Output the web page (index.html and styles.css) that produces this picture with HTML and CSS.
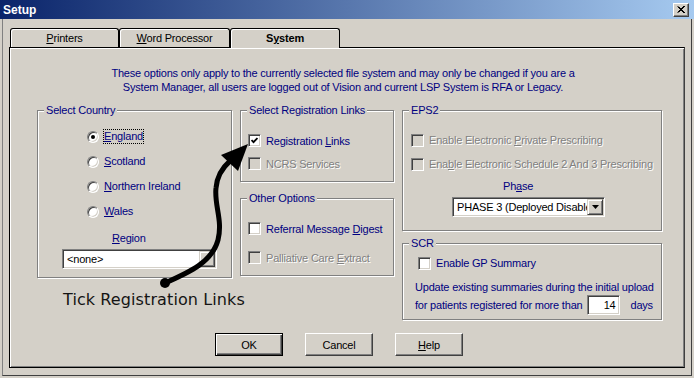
FILE: index.html
```html
<!DOCTYPE html>
<html lang="en">
  <head>
    <meta charset="UTF-8" />
    <meta name="viewport" content="width=device-width, initial-scale=1.0" />
    <title>Setup</title>
    <link rel="stylesheet" href="styles.css">
  </head>
  <body>
    <div class="window">
      <div class="titlebar">
        <span class="title">Setup</span>
        <span class="close">
          <svg width="8" height="7" viewBox="0 0 8 7"><path d="M0.5 0.5 L7 7 M1.5 0.5 L8 7 M7 0 L0.5 6.5 M8 0 L1.5 6.5" stroke="#000" stroke-width="1" fill="none"/></svg>
        </span>
      </div>

      <div class="client">
        <div class="tabs">
          <div class="tab tab-printers"><u>P</u>rinters</div>
          <div class="tab tab-word"><u>W</u>ord Processor</div>
          <div class="tab tab-system active">S<u>y</u>stem</div>
        </div>

        <div class="panel">
          <p class="notice">These options only apply to the currently selected file system and may only be changed if you are a<br>System Manager, all users are logged out of Vision and current LSP System is RFA or Legacy.</p>

          <div class="columns">
            <!-- left column -->
            <div class="col col-country">
              <fieldset class="group country">
                <legend>Select Country</legend>
                <div class="radios">
                  <div class="radio-row"><span class="radio checked"></span><span class="lbl focus"><u>E</u>ngland</span></div>
                  <div class="radio-row"><span class="radio"></span><span class="lbl"><u>S</u>cotland</span></div>
                  <div class="radio-row"><span class="radio"></span><span class="lbl"><u>N</u>orthern Ireland</span></div>
                  <div class="radio-row"><span class="radio"></span><span class="lbl"><u>W</u>ales</span></div>
                </div>
                <div class="region-label"><u>R</u>egion</div>
                <div class="combo region">
                  <span class="combo-text">&lt;none&gt;</span>
                  <span class="combo-btn"></span>
                </div>
              </fieldset>
              <div class="note">Tick Registration Links</div>
            </div>

            <!-- middle column -->
            <div class="col col-links">
              <fieldset class="group reg-links">
                <legend>Select Registration Links</legend>
                <div class="check-row first">
                  <span class="check">
                    <svg width="7" height="7" viewBox="0 0 7 7"><path d="M0.5 3 L2.5 5.2 L6.5 1" stroke="#000" stroke-width="1.8" fill="none"/></svg>
                  </span>
                  <span class="lbl">Registration <u>L</u>inks</span>
                </div>
                <div class="check-row">
                  <span class="check disabled"></span>
                  <span class="lbl disabled">NCRS Services</span>
                </div>
              </fieldset>

              <fieldset class="group other">
                <legend>Other Options</legend>
                <div class="check-row first">
                  <span class="check"></span>
                  <span class="lbl">Referral Message <u>D</u>igest</span>
                </div>
                <div class="check-row spaced">
                  <span class="check disabled"></span>
                  <span class="lbl disabled">Palliative Care <u>E</u>xtract</span>
                </div>
              </fieldset>
            </div>

            <!-- right column -->
            <div class="col col-eps">
              <fieldset class="group eps2">
                <legend>EPS2</legend>
                <div class="check-row first">
                  <span class="check disabled"></span>
                  <span class="lbl disabled">Enable Electronic <u>P</u>rivate Prescribing</span>
                </div>
                <div class="check-row">
                  <span class="check disabled"></span>
                  <span class="lbl disabled">Ena<u>b</u>le Electronic Schedule 2 And 3 Prescribing</span>
                </div>
                <div class="phase-label">Ph<u>a</u>se</div>
                <div class="combo phase">
                  <span class="combo-text">PHASE 3 (Deployed Disabled)</span>
                  <span class="combo-btn">
                    <svg width="7" height="4" viewBox="0 0 7 4"><path d="M0 0 H7 L3.5 4 Z" fill="#000"/></svg>
                  </span>
                </div>
              </fieldset>

              <fieldset class="group scr">
                <legend>SCR</legend>
                <div class="check-row first">
                  <span class="check"></span>
                  <span class="lbl">Enable GP Summary</span>
                </div>
                <div class="scr-text">Update existing summaries during the initial upload</div>
                <div class="scr-days">
                  <span>for patients registered for more than</span>
                  <span class="num">14</span>
                  <span class="days">days</span>
                </div>
              </fieldset>
            </div>
          </div>

          <div class="buttons">
            <button class="btn default">OK</button>
            <button class="btn">Cancel</button>
            <button class="btn"><u>H</u>elp</button>
          </div>
        </div>
      </div>

      <svg class="pointer" width="694" height="378" viewBox="0 0 694 378">
        <circle cx="165" cy="283" r="5" fill="#000"/>
        <path d="M165 283 C190 272 212 262 218 240 C223 220 214 205 216 188 C217 176 222 168 230 161" stroke="#000" stroke-width="5" fill="none" stroke-linecap="round"/>
        <polygon points="248,144 221,155 238,171" fill="#000"/>
      </svg>
    </div>
  </body>
</html>
```

FILE: styles.css
```css
body {
  margin: 0;
  font-family: "Liberation Sans", Arial, sans-serif;
  font-size: 11px;
  letter-spacing: -0.2px;
  background-color: #d4d0c8;
  overflow: hidden;
}
.window {
  position: relative;
  width: 694px;
  height: 378px;
  display: flex;
  flex-direction: column;
  box-sizing: border-box;
}
.titlebar {
  height: 19px;
  flex: none;
  display: flex;
  align-items: center;
  justify-content: space-between;
  padding: 0 5px 0 3px;
  background: linear-gradient(to right, #0a246a, #a6caf0);
}
.title {
  color: #fff;
  font-weight: bold;
  font-size: 12px;
  letter-spacing: 0;
}
.close {
  width: 16px;
  height: 14px;
  box-sizing: border-box;
  display: flex;
  align-items: center;
  justify-content: center;
  background-color: #d4d0c8;
  border: 1px solid;
  border-color: #fff #404040 #404040 #fff;
  box-shadow: inset -1px -1px 0 #808080;
}
.client {
  flex: 1;
  margin: 0 2px 2px 2px;
  padding: 9px 6px 7px 6px;
  border-left: 1px solid #808080;
  border-right: 1px solid #404040;
  border-bottom: 1px solid #404040;
}

/* tabs */
.tabs {
  display: flex;
  height: 19px;
  padding-left: 1px;
}
.tab {
  box-sizing: border-box;
  height: 19px;
  border: 1px solid #000;
  border-bottom: none;
  border-radius: 3px 3px 0 0;
  box-shadow: inset 1px 1px 0 #fff;
  text-align: center;
  line-height: 18px;
  color: #000;
}
.tab-printers { width: 109px; }
.tab-word { width: 111px; }
.tab-system { width: 110px; }
.tab.active {
  position: relative;
  z-index: 1;
  height: 20px;
  margin-bottom: -1px;
  font-weight: bold;
  background-color: #d4d0c8;
}
.panel {
  height: 321px;
  box-sizing: border-box;
  display: flex;
  flex-direction: column;
  border: 1px solid #000;
  border-right-color: #404040;
  box-shadow: inset 1px 1px 0 #fff, inset -1px -1px 0 #808080;
}
.notice {
  margin: 18px 0 0;
  padding-right: 8px;
  text-align: center;
  color: #000080;
  line-height: 14px;
}

/* group boxes */
.columns {
  display: flex;
  gap: 8px;
  margin-top: 10px;
  padding-left: 27px;
}
.col-country { width: 195px; }
.col-links { width: 154px; }
.col-eps { width: 260px; }
.group {
  margin: 0;
  padding: 0;
  min-width: 0;
  box-sizing: border-box;
  border: 1px solid #808080;
  box-shadow: inset 1px 1px 0 #fff, 1px 1px 0 #fff;
}
.group legend {
  margin-left: 6px;
  padding: 0 2px;
  line-height: 13px;
  color: #000080;
  background-color: #d4d0c8;
}
.lbl {
  color: #000080;
  white-space: nowrap;
}
.lbl.disabled {
  color: #808080;
  text-shadow: 1px 1px 0 #fff;
}

/* country */
.radios {
  margin-top: 7px;
}
.radio-row {
  display: flex;
  align-items: center;
  gap: 4px;
  height: 25px;
  padding-left: 49px;
}
.radio-row .lbl {
  border: 1px dotted transparent;
  line-height: 13px;
}
.radio-row .lbl.focus {
  border-color: #000;
}
.radio {
  width: 12px;
  height: 12px;
  flex: none;
  box-sizing: border-box;
  display: flex;
  align-items: center;
  justify-content: center;
  border-radius: 50%;
  border: 1px solid;
  border-color: #808080 #fff #fff #808080;
  box-shadow: inset 1px 1px 0 #404040, inset -1px -1px 0 #d4d0c8;
  background-color: #fff;
}
.radio.checked::after {
  content: "";
  width: 4px;
  height: 4px;
  border-radius: 50%;
  background-color: #000;
}
.region-label {
  margin-top: 7px;
  padding-left: 74px;
  line-height: 14px;
  color: #000080;
}
.combo {
  display: flex;
  align-items: center;
  height: 20px;
  box-sizing: border-box;
  border: 1px solid;
  border-color: #808080 #fff #fff #808080;
  box-shadow: inset 1px 1px 0 #404040, inset -1px -1px 0 #d4d0c8;
  background-color: #fff;
  padding: 1px;
}
.combo-text {
  flex: 1;
  min-width: 0;
  overflow: hidden;
  white-space: nowrap;
  padding-left: 3px;
  color: #000;
}
.combo-btn {
  width: 16px;
  height: 16px;
  flex: none;
  box-sizing: border-box;
  display: flex;
  align-items: center;
  justify-content: center;
  background-color: #d4d0c8;
  border: 1px solid;
  border-color: #d4d0c8 #404040 #404040 #d4d0c8;
  box-shadow: inset 1px 1px 0 #fff, inset -1px -1px 0 #808080;
}
.combo.region {
  width: 155px;
  margin: 4px 0 8px 24px;
}
.note {
  margin: 12px 0 0 26px;
  font-family: "DejaVu Sans", sans-serif;
  font-size: 16px;
  letter-spacing: 0.1px;
  line-height: 20px;
  color: #141414;
  white-space: nowrap;
}

/* check boxes */
.check-row {
  display: flex;
  align-items: center;
  gap: 5px;
  height: 23px;
  padding-left: 7px;
}
.check {
  width: 13px;
  height: 13px;
  flex: none;
  box-sizing: border-box;
  display: flex;
  align-items: center;
  justify-content: center;
  border: 1px solid;
  border-color: #808080 #fff #fff #808080;
  box-shadow: inset 1px 1px 0 #404040, inset -1px -1px 0 #d4d0c8;
  background-color: #fff;
}
.check.disabled {
  background-color: #d4d0c8;
}
.reg-links .check-row.first { margin-top: 12px; }
.reg-links { padding-bottom: 6px; }
.other {
  margin-top: 10px;
  padding-bottom: 6px;
}
.other .check-row.first { margin-top: 12px; }
.other .check-row.spaced { margin-top: 6px; }

.eps2 .check-row {
  height: 24px;
  padding-left: 8px;
}
.eps2 .check-row.first { margin-top: 11px; }
.phase-label {
  margin-top: 3px;
  padding-left: 100px;
  line-height: 14px;
  color: #000080;
}
.combo.phase {
  width: 153px;
  margin: 4px 0 13px 49px;
}
.scr {
  margin-top: 6px;
  padding-bottom: 4px;
}
.scr .check-row {
  height: 20px;
  padding-left: 15px;
}
.scr .check-row.first { margin-top: 3px; }
.scr-text {
  margin-top: 6px;
  padding-left: 12px;
  line-height: 16px;
  color: #000080;
  white-space: nowrap;
}
.scr-days {
  display: flex;
  align-items: center;
  height: 20px;
  padding-left: 12px;
  color: #000080;
  white-space: nowrap;
}
.num {
  width: 33px;
  height: 20px;
  margin-left: 5px;
  box-sizing: border-box;
  padding-right: 4px;
  text-align: right;
  line-height: 18px;
  color: #000;
  border: 1px solid;
  border-color: #808080 #fff #fff #808080;
  box-shadow: inset 1px 1px 0 #404040, inset -1px -1px 0 #d4d0c8;
  background-color: #fff;
}
.days {
  margin-left: 10px;
}

/* buttons */
.buttons {
  display: flex;
  gap: 22px;
  margin-top: auto;
  margin-bottom: 11px;
  padding-left: 205px;
}
.btn {
  width: 68px;
  height: 23px;
  padding: 0;
  box-sizing: border-box;
  font: inherit;
  letter-spacing: inherit;
  color: #000;
  background-color: #d4d0c8;
  border: 1px solid;
  border-color: #fff #404040 #404040 #fff;
  box-shadow: inset -1px -1px 0 #808080;
}
.btn.default {
  border-color: #000;
  box-shadow: inset 1px 1px 0 #fff, inset -1px -1px 0 #404040, inset -2px -2px 0 #808080;
}

/* annotation drawn over the dialog */
.pointer {
  position: absolute;
  top: 0;
  left: 0;
  pointer-events: none;
}
```
